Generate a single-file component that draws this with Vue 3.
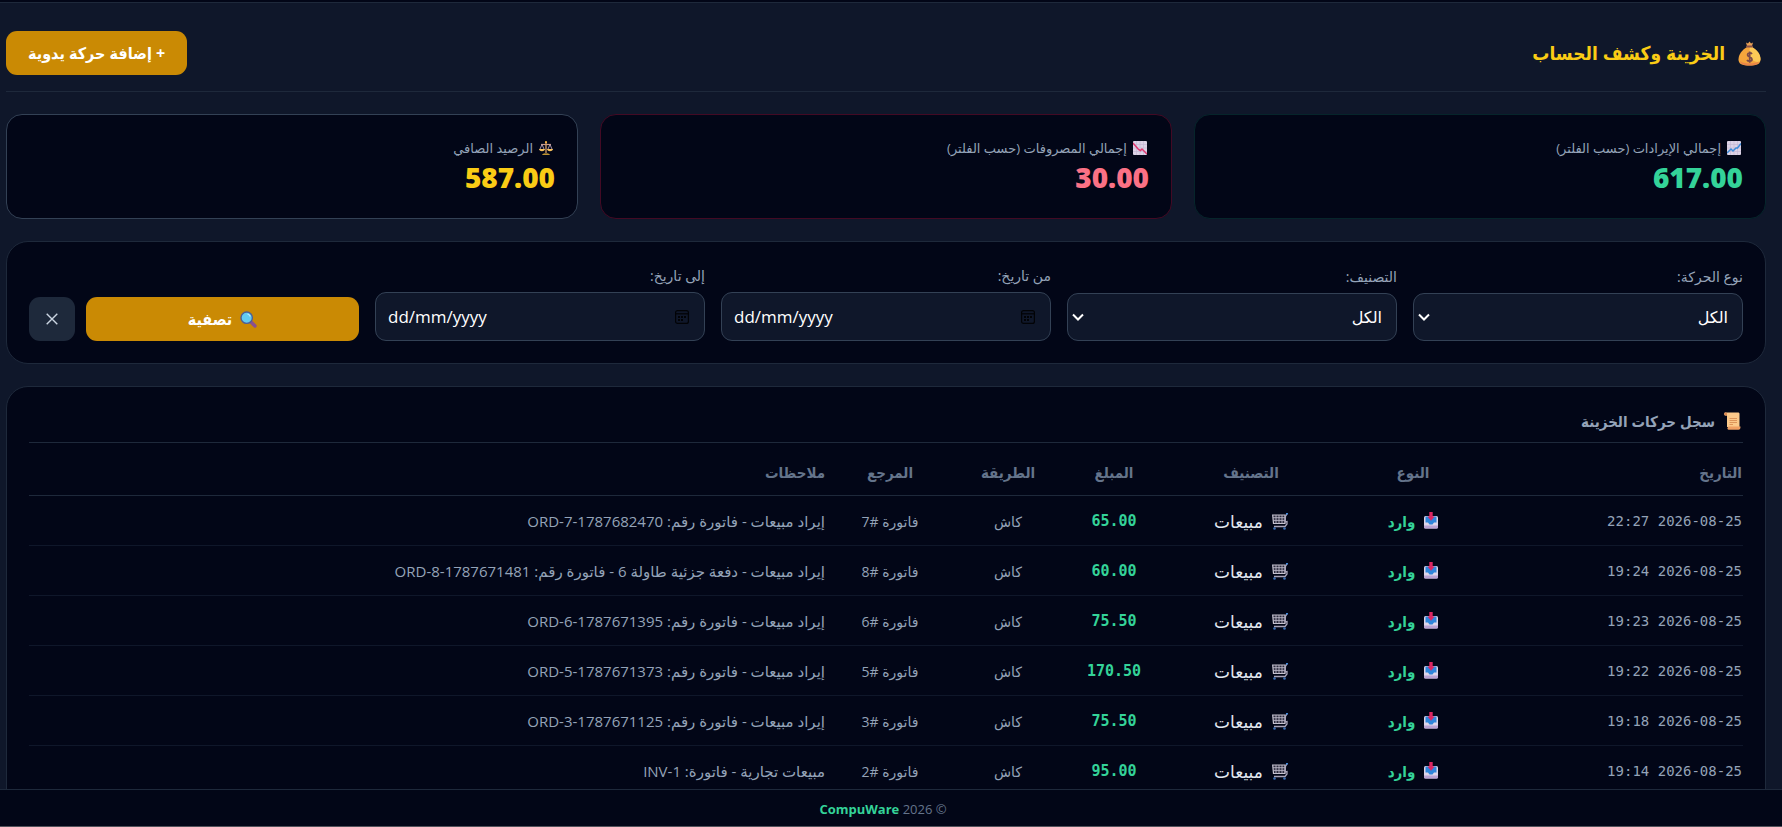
<script setup>
import { ref } from 'vue'

const kind = ref('all')
const category = ref('all')
const from = ref('')
const to = ref('')

const rows = [
  { date: '2026-08-25 22:27', amount: '65.00', reference: 'فاتورة #7', note: 'إيراد مبيعات - فاتورة رقم: ', code: 'ORD-7-1787682470' },
  { date: '2026-08-25 19:24', amount: '60.00', reference: 'فاتورة #8', note: 'إيراد مبيعات - دفعة جزئية طاولة 6 - فاتورة رقم: ', code: 'ORD-8-1787671481' },
  { date: '2026-08-25 19:23', amount: '75.50', reference: 'فاتورة #6', note: 'إيراد مبيعات - فاتورة رقم: ', code: 'ORD-6-1787671395' },
  { date: '2026-08-25 19:22', amount: '170.50', reference: 'فاتورة #5', note: 'إيراد مبيعات - فاتورة رقم: ', code: 'ORD-5-1787671373' },
  { date: '2026-08-25 19:18', amount: '75.50', reference: 'فاتورة #3', note: 'إيراد مبيعات - فاتورة رقم: ', code: 'ORD-3-1787671125' },
  { date: '2026-08-25 19:14', amount: '95.00', reference: 'فاتورة #2', note: 'مبيعات تجارية - فاتورة: ', code: 'INV-1' }
]

function clearFilters() {
  kind.value = 'all'
  category.value = 'all'
  from.value = ''
  to.value = ''
}
</script>

<template>
  <div class="shell" dir="rtl" lang="ar">
    <div class="topbar"></div>

    <main class="content">
      <header class="page-head">
        <h1 class="page-title">
          <svg class="bag" viewBox="0 0 23 25" aria-hidden="true">
            <path d="M8 1.500 L10 2.500 L11.500 .5 L13 2.500 L15 1.500 L14 5 H9 Z" fill="#e9a055" />
            <path d="M9 6 C4 9 .5 13.500 .5 18.500 C.5 23 4 24.500 11.500 24.500 C19 24.500 22.500 23 22.500 18.500 C22.500 13.500 19 9 14 6 Z" fill="#f5a53c" />
            <path d="M14 6 C19 9 22.500 13 22.500 18 C22.500 21 20 22 16 20 C11 17 11 10 12 6 Z" fill="#fdc956" />
            <path d="M2 20 C5 23 18 23 21 20.500 C20 23.500 17 24.500 11.500 24.500 C6 24.500 3 23.500 2 20 Z" fill="#ea8549" />
            <rect x="8" y="4.500" width="7" height="2" rx="1" fill="#8a5349" />
            <path d="M14 13 C13 11.500 9.500 11.500 9.500 14 C9.500 16.500 14 15.500 14 18.200 C14 20.800 10 20.800 9 19 M11.700 10.500 V21.800" fill="none" stroke="#7b4a4a" stroke-width="1.700" />
          </svg>
          <span>الخزينة وكشف الحساب</span>
        </h1>
        <button class="btn add" type="button">+ إضافة حركة يدوية</button>
      </header>

      <section class="cards">
        <article class="card income">
          <p class="card-label">
            <svg class="ico" viewBox="0 0 14 14" aria-hidden="true">
              <rect width="14" height="14" rx="1" fill="#ddd3e6" />
              <path d="M0 3.500H14M0 7H14M0 10.500H14M3.500 0V14M7 0V14M10.500 0V14" stroke="#c3b6d3" stroke-width=".6" />
              <path d="M0 12 L4 8 L6 10 L9 7 L10.500 7 L14 2.500" fill="none" stroke="#3b8ad8" stroke-width="1.500" />
            </svg>
            إجمالي الإيرادات (حسب الفلتر)
          </p>
          <p class="card-value">617.00</p>
        </article>
        <article class="card expense">
          <p class="card-label">
            <svg class="ico" viewBox="0 0 14 14" aria-hidden="true">
              <rect width="14" height="14" rx="1" fill="#ddd3e6" />
              <path d="M0 3.500H14M0 7H14M0 10.500H14M3.500 0V14M7 0V14M10.500 0V14" stroke="#c3b6d3" stroke-width=".6" />
              <path d="M0 2 L5.500 8.500 L7.500 9.500 L9 8 L14 13" fill="none" stroke="#e0386f" stroke-width="1.500" />
            </svg>
            إجمالي المصروفات (حسب الفلتر)
          </p>
          <p class="card-value">30.00</p>
        </article>
        <article class="card net">
          <p class="card-label">
            <svg class="ico" viewBox="0 0 14 14" aria-hidden="true">
              <path d="M7 1V12" stroke="#d9a06b" stroke-width="1.300" />
              <path d="M2 3.500 H12" stroke="#c99a80" stroke-width="1.200" />
              <path d="M3 3.500 L.8 8.500 M3 3.500 L5.200 8.500 M11 3.500 L8.800 8.500 M11 3.500 L13.200 8.500" stroke="#b9a2b8" stroke-width=".9" />
              <path d="M0 8 H6 C5.500 11 .5 11 0 8 Z M8 8 H14 C13.500 11 8.500 11 8 8 Z" fill="#fbc45c" />
              <path d="M3 13.800 C3.500 12 10.500 12 11 13.800 Z" fill="#fbc23c" />
              <circle cx="7" cy="1.200" r="1.100" fill="#fbb540" />
            </svg>
            الرصيد الصافي
          </p>
          <p class="card-value">587.00</p>
        </article>
      </section>

      <form class="panel filters" @submit.prevent>
        <div class="field">
          <label for="kind">نوع الحركة:</label>
          <div class="select-box">
            <select id="kind" v-model="kind">
              <option value="all">الكل</option>
              <option value="in">وارد</option>
            </select>
            <svg class="chevron" viewBox="0 0 12 8" aria-hidden="true"><path d="M1 1.500 L6 6.500 L11 1.500" /></svg>
          </div>
        </div>
        <div class="field">
          <label for="category">التصنيف:</label>
          <div class="select-box">
            <select id="category" v-model="category">
              <option value="all">الكل</option>
              <option value="sales">مبيعات</option>
            </select>
            <svg class="chevron" viewBox="0 0 12 8" aria-hidden="true"><path d="M1 1.500 L6 6.500 L11 1.500" /></svg>
          </div>
        </div>
        <div class="field">
          <label for="from">من تاريخ:</label>
          <div class="date-box" dir="ltr">
            <input id="from" v-model="from" type="text" placeholder="dd/mm/yyyy" />
            <svg class="calendar" viewBox="0 0 14 14" aria-hidden="true">
              <rect x=".6" y=".6" width="12.800" height="12.800" rx="2" />
              <path d="M.6 3.800H13.400" />
              <path class="dots" d="M3 7H5M6 7H8M9 7H11M3 10H5M6 10H8" />
            </svg>
          </div>
        </div>
        <div class="field">
          <label for="to">إلى تاريخ:</label>
          <div class="date-box" dir="ltr">
            <input id="to" v-model="to" type="text" placeholder="dd/mm/yyyy" />
            <svg class="calendar" viewBox="0 0 14 14" aria-hidden="true">
              <rect x=".6" y=".6" width="12.800" height="12.800" rx="2" />
              <path d="M.6 3.800H13.400" />
              <path class="dots" d="M3 7H5M6 7H8M9 7H11M3 10H5M6 10H8" />
            </svg>
          </div>
        </div>
        <div class="actions">
          <button class="btn apply" type="submit">
            <svg class="glass" viewBox="0 0 17 17" aria-hidden="true">
              <path d="M10.500 10.500 L15 15" stroke="#8a4f8f" stroke-width="3.400" stroke-linecap="round" />
              <circle cx="6.700" cy="6.700" r="5.700" fill="#62cbf0" stroke="#4c5f96" stroke-width="1.400" />
              <path d="M7.500 3 A4 4 0 0 1 10.300 5.500" fill="none" stroke="#b9ecfb" stroke-width="1.200" />
            </svg>
            تصفية
          </button>
          <button class="btn clear" type="button" aria-label="مسح" @click="clearFilters">
            <svg class="cross" viewBox="0 0 12 12" aria-hidden="true"><path d="M.7 .7 L11.300 11.300 M11.300 .7 L.7 11.300" /></svg>
          </button>
        </div>
      </form>

      <section class="panel ledger">
        <h2 class="ledger-title">
          <svg class="scroll" viewBox="0 0 17 18" aria-hidden="true">
            <path d="M1 .5 H14 C15 .5 15.500 1 15.500 2 V15 H3 V3.500 H1 C0 3.500 0 .5 1 .5 Z" fill="#fcc98a" />
            <path d="M1 .5 C0 .5 0 3.500 1.200 3.500 H3 V1.500 C3 .8 2 .5 1 .5 Z" fill="#e08a52" />
            <path d="M4.500 14.500 H16.500 C16.500 17 15.800 17.700 14.500 17.700 H4.500 C3 17.700 3 15.500 4.500 14.500 Z" fill="#f0a063" />
            <path d="M5.500 6.500H13M5.500 8.500H13M5.500 10.500H13M5.500 12.500H9" stroke="#d98e55" stroke-width=".9" />
          </svg>
          سجل حركات الخزينة
        </h2>
        <table>
          <colgroup>
            <col class="w-date" /><col class="w-kind" /><col class="w-cat" /><col class="w-amount" />
            <col class="w-method" /><col class="w-ref" /><col />
          </colgroup>
          <thead>
            <tr>
              <th class="start">التاريخ</th>
              <th>النوع</th>
              <th>التصنيف</th>
              <th>المبلغ</th>
              <th>الطريقة</th>
              <th>المرجع</th>
              <th class="start">ملاحظات</th>
            </tr>
          </thead>
          <tbody>
            <tr v-for="row in rows" :key="row.code">
              <td class="date">{{ row.date }}</td>
              <td class="kind">
                <span class="tag">
                  <svg class="inbox" viewBox="0 0 14 17" aria-hidden="true">
                    <rect x="0" y="4" width="14" height="12.500" rx="1.500" fill="#ddd6ea" />
                    <path d="M1.500 4.500 H12.500 V10.500 H10 L8.500 12.500 H5.500 L4 10.500 H1.500 Z" fill="#2f86da" />
                    <path d="M0 13.500 H14 V15 Q14 16.500 12.500 16.500 H1.500 Q0 16.500 0 15 Z" fill="#b9a3d3" />
                    <path d="M5.300 0 H8.700 V4.500 H10.600 L7 8.700 L3.400 4.500 H5.300 Z" fill="#dc2662" />
                  </svg>
                  وارد
                </span>
              </td>
              <td class="category">
                <span class="tag">
                  <svg class="cart" viewBox="0 0 16 17" aria-hidden="true">
                    <path d="M.7 2 H13 L13 10.500 H1.500 Z" fill="#2b2b3d" stroke="#c8c4d2" stroke-width="1.200" />
                    <path d="M4 2V10.500M7 2V10.500M10 2V10.500M1 4.700H13M1.400 7.400H13" stroke="#bab5c6" stroke-width=".9" />
                    <path d="M15 1 L13.500 3 L13.200 9 L15 8.500 L15 11 L13 13.500 H2" fill="none" stroke="#a9a4b8" stroke-width="1.300" />
                    <path d="M16 .7 H14" stroke="#3f8ae0" stroke-width="1.500" />
                    <circle cx="2.500" cy="15.500" r="1.300" fill="#3b6fb5" />
                    <circle cx="12.500" cy="15.500" r="1.300" fill="#3b6fb5" />
                  </svg>
                  مبيعات
                </span>
              </td>
              <td class="amount">{{ row.amount }}</td>
              <td class="muted">كاش</td>
              <td class="muted">{{ row.reference }}</td>
              <td class="note">{{ row.note }}<bdi>{{ row.code }}</bdi></td>
            </tr>
          </tbody>
        </table>
      </section>
    </main>

    <footer class="footer">
      <p>© 2026 <strong>CompuWare</strong></p>
    </footer>
  </div>
</template>

<style>
body {
  background: #0f172a;
}
</style>

<style scoped>
* {
  box-sizing: border-box;
}

.shell {
  height: 100vh;
  display: flex;
  flex-direction: column;
  overflow: hidden;
  background: #0f172a;
  color: #e2e8f0;
  font-family: "Open Sans", "Noto Sans", "DejaVu Sans", sans-serif;
  font-size: 16px;
}

h1, h2, p {
  margin: 0;
}

.topbar {
  flex: none;
  height: 3px;
  background: #020617;
  border-bottom: 1px solid #1e293b;
}

.content {
  flex: 1;
  min-height: 0;
  overflow: hidden;
  padding: 28px 16px 0 6px;
}

.page-head {
  display: flex;
  align-items: center;
  justify-content: space-between;
  padding-bottom: 16px;
  border-bottom: 1px solid #1e293b;
  margin-bottom: 22px;
}

.page-title,
.btn,
.ledger-title,
th,
.kind {
  font-family: "Open Sans", "DejaVu Sans Condensed", "DejaVu Sans", sans-serif;
  font-weight: 700;
}

.page-title {
  display: flex;
  align-items: center;
  gap: 13px;
  padding-right: 5px;
  color: #facc15;
  font-size: 19px;
  line-height: 28px;
}

.bag {
  width: 23px;
  height: 25px;
}

.btn {
  display: flex;
  align-items: center;
  justify-content: center;
  height: 44px;
  border: 0;
  border-radius: 11px;
  background: #ca8a04;
  color: #fff;
  font-size: 16px;
  cursor: pointer;
}

.add {
  padding: 0 22px;
}

.cards {
  display: grid;
  grid-template-columns: repeat(3, 1fr);
  gap: 22px;
  margin-bottom: 22px;
}

.card {
  height: 105px;
  padding: 22px;
  border: 1px solid #334155;
  border-radius: 16px;
  background: #020617;
}

.card-label {
  display: flex;
  align-items: center;
  gap: 6px;
  padding-right: 2px;
  color: #94a3b8;
  font-size: 13px;
  line-height: 22px;
}

.ico {
  width: 14px;
  height: 14px;
}

.card-value {
  font-size: 28px;
  line-height: 36px;
  font-weight: 800;
}

.income {
  border-color: #06252b;
}

.income .card-value {
  color: #34d399;
}

.expense {
  border-color: #430a24;
}

.expense .card-value {
  color: #fb7185;
}

.net .card-value {
  color: #facc15;
}

.panel {
  border: 1px solid #1e293b;
  border-radius: 22px;
  background: #020617;
  padding: 22px;
}

.filters {
  display: grid;
  grid-template-columns: repeat(5, 1fr);
  gap: 16px;
  align-items: end;
  margin-bottom: 22px;
}

.field label {
  display: block;
  margin-bottom: 4px;
  color: #94a3b8;
  font-size: 14px;
  line-height: 24px;
}

.select-box,
.date-box {
  display: flex;
  align-items: center;
  border: 1px solid #334155;
  border-radius: 11px;
  background: #0f172a;
}

.select-box {
  position: relative;
  height: 48px;
}

.date-box {
  height: 49px;
  padding: 0 15px 0 12px;
}

select,
input {
  flex: 1;
  min-width: 0;
  height: 100%;
  border: 0;
  outline: 0;
  background: transparent;
  color: #fff;
  font: inherit;
}

select {
  appearance: none;
  padding: 0 14px 0 28px;
  border-radius: 11px;
}

option {
  background: #0f172a;
}

input {
  padding: 0;
  font-size: 17px;
}

input::placeholder {
  color: #fff;
  opacity: 1;
}

.chevron {
  position: absolute;
  left: 4px;
  width: 12px;
  height: 8px;
  pointer-events: none;
  fill: none;
  stroke: #fff;
  stroke-width: 2;
}

.calendar {
  width: 14px;
  height: 14px;
  fill: none;
  stroke: #020306;
  stroke-width: 1.2;
}

.calendar .dots {
  stroke-width: 2;
}

.actions {
  display: flex;
  gap: 11px;
}

.apply {
  flex: 1;
  gap: 8px;
}

.glass {
  width: 17px;
  height: 17px;
}

.clear {
  width: 46px;
  background: #1e293b;
}

.cross {
  width: 12px;
  height: 12px;
  stroke: #cbd5e1;
  stroke-width: 1.4;
}

.ledger-title {
  display: flex;
  align-items: flex-start;
  gap: 9px;
  height: 34px;
  padding-right: 2px;
  border-bottom: 1px solid #1e293b;
  color: #94a3b8;
  font-size: 15px;
  line-height: 24px;
}

.scroll {
  width: 17px;
  height: 18px;
  margin-top: 3px;
}

table {
  width: 100%;
  table-layout: fixed;
  border-collapse: collapse;
}

.w-date { width: 253px; }
.w-kind { width: 154px; }
.w-cat { width: 170px; }
.w-amount { width: 104px; }
.w-method { width: 108px; }
.w-ref { width: 128px; }

th {
  height: 52px;
  padding: 6px 1px 0;
  border-bottom: 1px solid #1e293b;
  color: #64748b;
  font-size: 15px;
  text-align: center;
}

td {
  height: 50px;
  padding: 2px 1px 0;
  border-bottom: 1px solid #0f172a;
  text-align: center;
  white-space: nowrap;
}

th.start {
  text-align: right;
}

.date {
  color: #94a3b8;
  font-family: "DejaVu Sans Mono", monospace;
  font-size: 14px;
  text-align: right;
}

.tag {
  display: inline-flex;
  align-items: center;
  gap: 9px;
  padding-top: 2px;
}

.kind {
  color: #34d399;
  font-size: 15px;
}

.category {
  font-size: 17px;
}

.inbox {
  width: 14px;
  height: 17px;
}

.cart {
  width: 16px;
  height: 17px;
}

.amount {
  color: #34d399;
  font-family: "DejaVu Sans Mono", monospace;
  font-size: 15px;
  font-weight: 700;
}

.muted {
  color: #94a3b8;
  font-size: 14px;
}

.note {
  color: #94a3b8;
  font-size: 15px;
  text-align: right;
}

.footer {
  flex: none;
  height: 38px;
  display: flex;
  align-items: center;
  justify-content: center;
  padding: 2px 16px 0 0;
  border-top: 1px solid #1e293b;
  border-bottom: 1px solid #52525b;
  background: #020617;
  color: #64748b;
  font-size: 13px;
}

.footer strong {
  color: #34d399;
}
</style>
